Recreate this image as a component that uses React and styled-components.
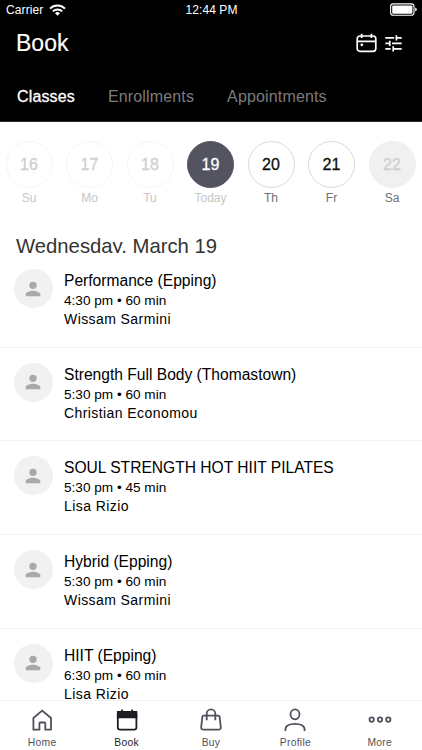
import React from "react";
import styled, { createGlobalStyle } from "styled-components";

const GlobalStyle = createGlobalStyle`
  * {
    box-sizing: border-box;
  }
  body {
    margin: 0;
    overflow: hidden;
    background: #fff;
    font-family: "Liberation Sans", Arial, sans-serif;
  }
`;

const Screen = styled.div`
  display: flex;
  flex-direction: column;
  width: 422px;
  height: 750px;
  background: #fff;
  color: #111;
`;

const Header = styled.header`
  flex: none;
  height: 122px;
  background: #000;
  color: #fff;
  border-bottom: 1px solid #2a2a2a;
`;

const StatusBar = styled.div`
  display: grid;
  grid-template-columns: 1fr auto 1fr;
  align-items: center;
  height: 19px;
  padding: 0 5px 0 6px;
  font-size: 12px;
  letter-spacing: 0.1px;
`;

const Carrier = styled.div`
  display: flex;
  align-items: center;
  gap: 6px;
`;

const Battery = styled.svg`
  justify-self: end;
`;

const TitleBar = styled.div`
  display: flex;
  align-items: center;
  justify-content: space-between;
  height: 48px;
  padding: 0 20px 0 16px;
`;

const PageTitle = styled.h1`
  margin: 0;
  font-size: 23px;
  line-height: 26px;
  padding-bottom: 1px;
  font-weight: 400;
  -webkit-text-stroke: 0.15px #fff;
`;

const Actions = styled.div`
  display: flex;
  align-items: center;
  gap: 8px;
`;

const Tabs = styled.nav`
  display: flex;
  gap: 33px;
  height: 54px;
  padding: 5px 17px 0;
  align-items: center;
`;

const Tab = styled.span`
  font-size: 16px;
  letter-spacing: 0.15px;
  color: ${(props) => (props.$active ? "#fff" : "#7c7c7c")};
  -webkit-text-stroke: ${(props) => (props.$active ? "0.3px #fff" : "0")};
`;

const Week = styled.div`
  flex: none;
  display: grid;
  grid-template-columns: repeat(7, 60.5px);
  justify-content: center;
  padding: 19px 1px 0 0;
`;

const Day = styled.div`
  display: flex;
  flex-direction: column;
  align-items: center;
  gap: 3px;
`;

const dayColors = {
  past: { color: "#cfcfcf", bg: "#fff", border: "#f5f5f5", label: "#c6c6c6" },
  today: { color: "#fff", bg: "#53545f", border: "#53545f", label: "#c6c6c6" },
  open: { color: "#111", bg: "#fff", border: "#d9d9d9", label: "#707070" },
  closed: { color: "#cfcfcf", bg: "#f0f0f0", border: "#f0f0f0", label: "#707070" },
};

const DayNumber = styled.div`
  display: flex;
  align-items: center;
  justify-content: center;
  width: 47px;
  height: 47px;
  border-radius: 50%;
  border: 1px solid ${(props) => dayColors[props.$state].border};
  background: ${(props) => dayColors[props.$state].bg};
  color: ${(props) => dayColors[props.$state].color};
  font-size: 16px;
  -webkit-text-stroke: 0.3px ${(props) => dayColors[props.$state].color};
`;

const DayLabel = styled.div`
  font-size: 12px;
  line-height: 14px;
  color: ${(props) => dayColors[props.$state].label};
`;

// the heading box is shorter than its line, so descenders are cut off
const DateHeading = styled.h2`
  flex: none;
  margin: 29px 0 1px;
  padding-left: 16px;
  height: 19px;
  overflow: hidden;
  font-size: 20.3px;
  line-height: 24px;
  font-weight: 400;
  color: #333;
`;

const ClassList = styled.ul`
  flex: 1;
  min-height: 0;
  overflow: hidden;
  margin: 0;
  padding: 0;
  list-style: none;
`;

const ClassRow = styled.li`
  display: flex;
  gap: 11px;
  height: 93.7px;
  padding: 15px 14px 0;
  border-bottom: 1px solid #f2f2f2;
`;

const Avatar = styled.div`
  display: flex;
  flex: none;
  align-items: center;
  justify-content: center;
  width: 39px;
  height: 39px;
  padding-right: 1px;
  border-radius: 50%;
  background: #f1f1f1;
`;

const Info = styled.div`
  padding-top: 2px;
  white-space: nowrap;
`;

const ClassName = styled.div`
  font-size: 15.6px;
  line-height: 20px;
  color: #000;
`;

const Time = styled.div`
  font-size: 13.6px;
  line-height: 19px;
  color: #000;
`;

const Teacher = styled.div`
  font-size: 14px;
  line-height: 19px;
  letter-spacing: 0.42px;
  color: #000;
`;

const BottomNav = styled.nav`
  flex: none;
  display: grid;
  grid-template-columns: repeat(5, 1fr);
  height: 50px;
  border-top: 1px solid #f3f3f3;
  background: #fff;
`;

const NavItem = styled.div`
  display: flex;
  flex-direction: column;
  align-items: center;
  padding-top: 7px;
  gap: 4px;
  font-size: 10.3px;
  line-height: 13px;
  letter-spacing: 0.3px;
  color: ${(props) => (props.$active ? "#1d1d24" : "#50515a")};
`;

const days = [
  { number: 16, label: "Su", state: "past" },
  { number: 17, label: "Mo", state: "past" },
  { number: 18, label: "Tu", state: "past" },
  { number: 19, label: "Today", state: "today" },
  { number: 20, label: "Th", state: "open" },
  { number: 21, label: "Fr", state: "open" },
  { number: 22, label: "Sa", state: "closed" },
];

const classes = [
  { name: "Performance (Epping)", time: "4:30 pm • 60 min", teacher: "Wissam Sarmini" },
  { name: "Strength Full Body (Thomastown)", time: "5:30 pm • 60 min", teacher: "Christian Economou" },
  { name: "SOUL STRENGTH HOT HIIT PILATES", time: "5:30 pm • 45 min", teacher: "Lisa Rizio" },
  { name: "Hybrid (Epping)", time: "5:30 pm • 60 min", teacher: "Wissam Sarmini" },
  { name: "HIIT (Epping)", time: "6:30 pm • 60 min", teacher: "Lisa Rizio" },
];

const WifiIcon = () => (
  <svg width="17" height="12" viewBox="0 0 17 12" fill="none" stroke="#fff" strokeWidth="2">
    <path d="M1 4.6a10.6 10.6 0 0 1 15 0" />
    <path d="M3.8 7.4a6.7 6.7 0 0 1 9.4 0" />
    <path d="M8.5 11.8 6 9.2a3.6 3.6 0 0 1 5 0z" fill="#fff" stroke="none" />
  </svg>
);

const BatteryIcon = () => (
  <Battery width="28" height="13" viewBox="0 0 28 13">
    <rect x="1.6" y="0.9" width="23.4" height="11.4" rx="2.8" fill="none" stroke="#fff" strokeWidth="1.1" />
    <rect x="3.2" y="2.5" width="20.2" height="8.2" rx="1" fill="#fff" />
    <path d="M26.2 4.6q1.6.6 1.6 2t-1.6 2z" fill="#fff" />
  </Battery>
);

const CalendarIcon = () => (
  <svg width="21" height="20" viewBox="0 0 21 20" fill="none" stroke="#fff" strokeWidth="1.7">
    <rect x="1.2" y="3" width="18.6" height="15.3" rx="2.8" />
    <path d="M1.2 8.4h18.6M5.6 .8v4.2M15.4 .8v4.2" />
    <circle cx="5.8" cy="11.8" r="1.4" fill="#fff" stroke="none" />
  </svg>
);

const TuneIcon = () => (
  <svg width="17" height="17" viewBox="0 0 17 17" fill="none" stroke="#fff" strokeWidth="1.7">
    <path d="M.3 2.9h8.9M11.4 2.9h5.3M11.4 .3v5.2" />
    <path d="M.3 8.4h4.3M7 8.4h9.7M4.8 5.8V11" />
    <path d="M.3 13.9h5.4M8.2 13.9h8.5M8.2 11.3v5.2" />
  </svg>
);

const PersonIcon = () => (
  <svg width="22" height="22" viewBox="0 0 24 24" fill="#a9a9a9">
    <circle cx="12" cy="8" r="4" />
    <path d="M12 14c-2.67 0-8 1.34-8 4v1q0 1 1 1h14q1 0 1-1v-1c0-2.66-5.33-4-8-4z" />
  </svg>
);

const navIcons = {
  Home: (
    <path d="M3.4 10 12.2 2.6 21 10v11.6h-5.7v-6.3q0-.8-.8-.8h-4.3q-.8 0-.8.8v6.3h-6z" />
  ),
  Book: (
    <>
      <rect x="2.8" y="4" width="18.6" height="17.6" rx="2.4" />
      <path d="M2.8 4h18.6v5.4H2.8z" fill="currentColor" />
      <path d="M7 1.6v4M17.2 1.6v4" />
    </>
  ),
  Buy: (
    <>
      <path d="M4.6 7.6h14.8q1 0 1.2 1l1.2 10.6q.2 2.4-2.2 2.4H4.4q-2.4 0-2.2-2.4L3.4 8.6q.2-1 1.2-1z" />
      <path d="M7.7 12.2V5.7a4.3 4.3 0 0 1 8.6 0v6.5" />
    </>
  ),
  Profile: (
    <>
      <ellipse cx="12" cy="6.3" rx="4.5" ry="5" />
      <path d="M2.4 23v-1.5c0-3.5 4-5.6 9.6-5.6s9.6 2.1 9.6 5.6V23" />
    </>
  ),
  More: (
    <>
      <circle cx="3.7" cy="11.6" r="2.2" />
      <circle cx="12" cy="11.6" r="2.2" />
      <circle cx="20.3" cy="11.6" r="2.2" />
    </>
  ),
};

const App = () => (
  <>
    <GlobalStyle />
    <Screen>
      <Header>
        <StatusBar>
          <Carrier>
            Carrier
            <WifiIcon />
          </Carrier>
          <span>12:44 PM</span>
          <BatteryIcon />
        </StatusBar>
        <TitleBar>
          <PageTitle>Book</PageTitle>
          <Actions>
            <CalendarIcon />
            <TuneIcon />
          </Actions>
        </TitleBar>
        <Tabs>
          <Tab $active>Classes</Tab>
          <Tab>Enrollments</Tab>
          <Tab>Appointments</Tab>
        </Tabs>
      </Header>
      <Week>
        {days.map((day) => (
          <Day key={day.number}>
            <DayNumber $state={day.state}>{day.number}</DayNumber>
            <DayLabel $state={day.state}>{day.label}</DayLabel>
          </Day>
        ))}
      </Week>
      <DateHeading>Wednesday, March 19</DateHeading>
      <ClassList>
        {classes.map((item) => (
          <ClassRow key={item.name}>
            <Avatar>
              <PersonIcon />
            </Avatar>
            <Info>
              <ClassName>{item.name}</ClassName>
              <Time>{item.time}</Time>
              <Teacher>{item.teacher}</Teacher>
            </Info>
          </ClassRow>
        ))}
      </ClassList>
      <BottomNav>
        {Object.keys(navIcons).map((name) => (
          <NavItem key={name} $active={name === "Book"}>
            <svg width="24" height="24" viewBox="0 0 24 24" fill="none" stroke="currentColor" strokeWidth="1.8">
              {navIcons[name]}
            </svg>
            {name}
          </NavItem>
        ))}
      </BottomNav>
    </Screen>
  </>
);

export default App;
